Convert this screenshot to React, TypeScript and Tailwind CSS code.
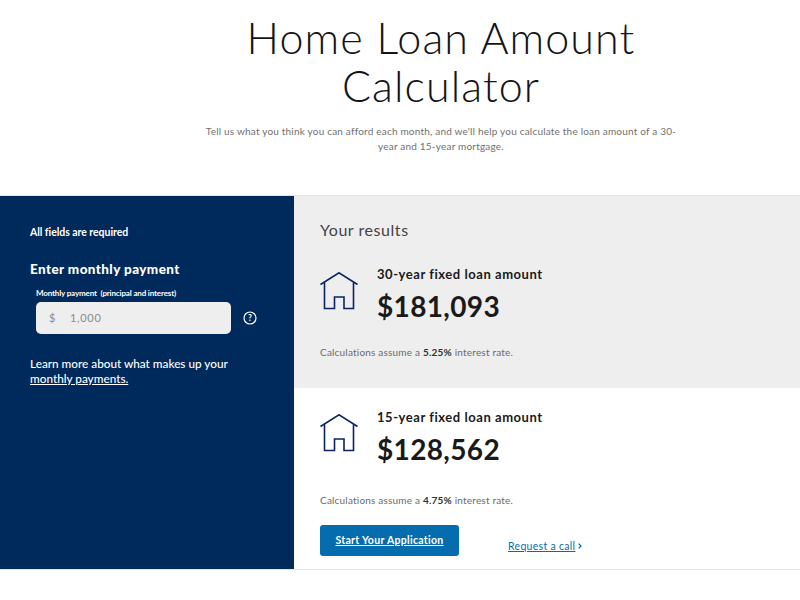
const font = "font-['Lato',sans-serif]";

function HouseIcon() {
  return (
    <svg width="38" height="38" viewBox="0 0 38 38" fill="none" stroke="#0a2463" strokeWidth="1.6" className="shrink-0">
      <path d="M.5 12.5 19 .8 37.5 12.5" />
      <path d="M4.5 10.5V36.5H14.5V25H24V36.5H33.5V10.5" />
    </svg>
  );
}

function ResultRow({ term, amount, iconTop }: { term: string; amount: string; iconTop: string }) {
  return (
    <div className="flex">
      <div className={`w-[57px] ${iconTop}`}>
        <HouseIcon />
      </div>
      <div>
        <p className="text-[13px] leading-[18px] font-bold tracking-[0.55px] text-[#1a1a1a]">{term}</p>
        <p className="mt-[5px] text-[28px] leading-[36px] font-bold tracking-[0.35px] text-[#1a1a1a]">{amount}</p>
      </div>
    </div>
  );
}

function RateNote({ rate }: { rate: string }) {
  return (
    <p className="text-[10px] leading-[14px] tracking-[0.2px] text-[#6b6b6b]">
      Calculations assume a <b className="font-bold text-[#333]">{rate}</b> interest rate.
    </p>
  );
}

export default function App() {
  return (
    <div className={`${font} h-[600px] w-[800px] overflow-hidden bg-white`}>
      <header className="h-[195px] pl-[82px] text-center">
        <h1 className="pt-[14px] text-[43px] leading-[48px] font-light tracking-[1.1px] text-[#141414]">
          Home Loan Amount
          <br />
          Calculator
        </h1>
        <p className="mx-auto mt-[14px] w-[480px] text-[10px] leading-[15px] tracking-[0.2px] text-[#707070]">
          Tell us what you think you can afford each month, and we'll help you calculate the loan amount of a 30-year and 15-year mortgage.
        </p>
      </header>

      <div className="flex h-[375px] border-y border-[#e5e5e5]">
        <aside className="w-[294px] shrink-0 bg-[#012a5c] pt-[29px] pl-[30px] text-white">
          <p className="text-[10.5px] leading-[14px] font-bold tracking-[-0.05px]">All fields are required</p>
          <h2 className="mt-[21px] text-[13.5px] leading-[18px] font-black tracking-[0.4px]">Enter monthly payment</h2>
          <label className="mt-[10px] ml-[6px] block text-[8px] leading-[10px] font-bold tracking-[-0.15px]">
            Monthly payment&nbsp; (principal and interest)
          </label>
          <div className="mt-[4px] ml-[6px] flex items-center">
            <div className="flex h-[32px] w-[195px] items-center rounded-[5px] bg-[#eeeeee] pl-[13px] text-[11px] tracking-[0.7px] text-[#8a8a8a]">
              <span className="w-[21px]">$</span>
              <span>1,000</span>
            </div>
            <svg width="14" height="14" viewBox="0 0 14 14" className="ml-[12px]">
              <circle cx="7" cy="7" r="6" fill="none" stroke="#fff" strokeWidth="1.2" />
              <text x="7" y="10" textAnchor="middle" fontSize="8.5" fontWeight="700" fill="#fff">?</text>
            </svg>
          </div>
          <p className="mt-[22px] w-[220px] text-[11.75px] leading-[15px] font-medium">
            Learn more about what makes up your <a className="underline">monthly payments.</a>
          </p>
        </aside>

        <main className="flex-1">
          <section className="h-[192px] bg-[#eeeeee] pt-[24px] pl-[26px]">
            <h3 className="text-[16px] leading-[20px] tracking-[0.55px] text-[#444]">Your results</h3>
            <div className="mt-[25px]">
              <ResultRow term="30-year fixed loan amount" amount="$181,093" iconTop="pt-[7px]" />
            </div>
            <div className="mt-[21px]">
              <RateNote rate="5.25%" />
            </div>
          </section>
          <section className="pt-[20px] pl-[26px]">
            <ResultRow term="15-year fixed loan amount" amount="$128,562" iconTop="pt-[6px]" />
            <div className="mt-[26px]">
              <RateNote rate="4.75%" />
            </div>
            <div className="mt-[18px] flex items-end">
              <a className="flex h-[31px] w-[139px] items-center justify-center rounded-[3px] bg-[#056dae] text-[10.5px] font-bold tracking-[0.3px] text-white underline">
                Start Your Application
              </a>
              <a className="mb-[3px] ml-[49px] flex items-center gap-[3px] text-[10.5px] leading-[14px] tracking-[0.3px] text-[#056dae]">
                <span className="underline">Request a call</span>
                <svg width="4" height="6" viewBox="0 0 4 6" fill="none" stroke="#056dae" strokeWidth="1.3">
                  <path d="M.7.6 3 3 .7 5.4" />
                </svg>
              </a>
            </div>
          </section>
        </main>
      </div>
    </div>
  );
}
